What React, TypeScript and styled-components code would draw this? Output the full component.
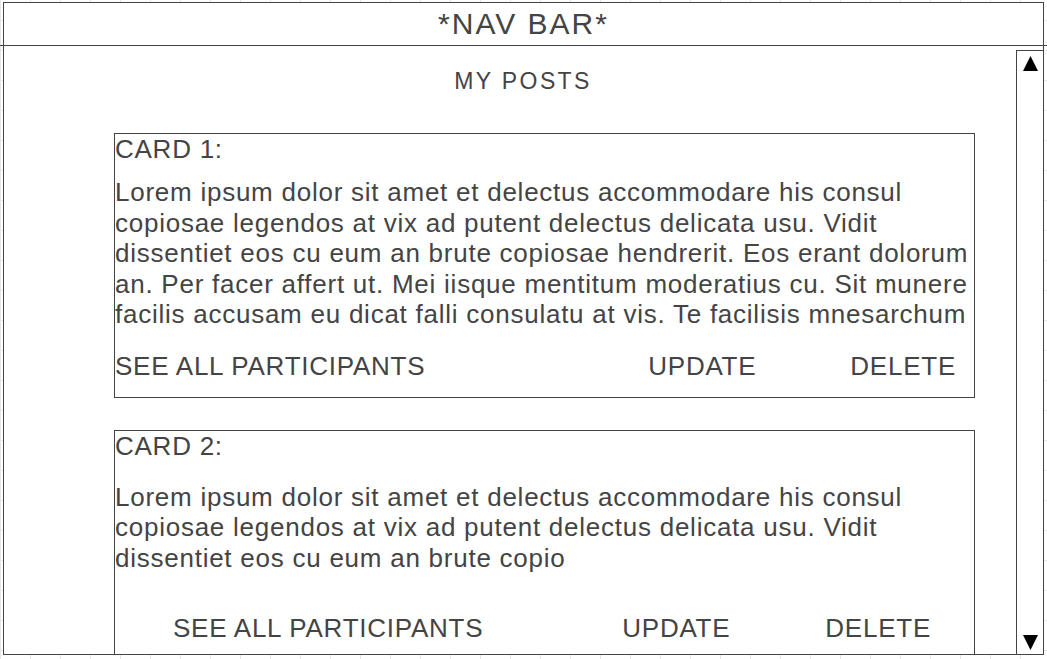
import React from "react";
import styled, { createGlobalStyle } from "styled-components";

const GlobalStyle = createGlobalStyle`
  html, body {
    margin: 0;
    padding: 0;
  }
  body {
    width: 1047px;
    height: 659px;
    overflow: hidden;
    background-color: #ffffff;
    background-image:
      linear-gradient(to right, #e6e6e6 1px, transparent 1px),
      linear-gradient(to bottom, #e6e6e6 1px, transparent 1px);
    background-size: 30px 30px, 30px 30px;
    background-position: 0 0, 0 20px;
    font-family: "Liberation Sans", Arial, sans-serif;
    color: #444444;
  }
`;

const Frame = styled.div`
  box-sizing: border-box;
  margin: 2px 0 0 3px;
  width: 1041px;
  height: 653px;
  border: 1px solid #444444;
  background: #ffffff;
  display: flex;
  flex-direction: column;
`;

const NavBar = styled.header`
  position: relative;
  height: 42px;
  flex: none;
  border-bottom: 1px solid #444444;
  display: flex;
  align-items: center;
  justify-content: center;
  font-size: 30px;
  letter-spacing: 2px;

  &::after {
    content: "";
    position: absolute;
    left: -4px;
    right: -4px;
    bottom: -1px;
    height: 1px;
    background: #444444;
  }
`;

const Content = styled.div`
  flex: 1;
  min-height: 0;
  display: flex;
  overflow: hidden;
`;

const Main = styled.main`
  flex: 1;
  min-width: 0;
  padding: 0 41px 0 110px;
  display: flex;
  flex-direction: column;
`;

const Title = styled.h1`
  margin: 20px -67px 0 -110px;
  font-weight: normal;
  font-size: 23px;
  line-height: 30px;
  letter-spacing: 2.4px;
  text-align: center;
`;

const Card = styled.section<{ $top: number }>`
  flex: none;
  margin-top: ${(p) => p.$top}px;
  border: 1px solid #444444;
  padding-bottom: 16px;
  font-size: 26px;
  letter-spacing: 0.75px;
`;

const Label = styled.div`
  line-height: 30px;
`;

const Body = styled.p<{ $top: number }>`
  margin: ${(p) => p.$top}px 0 0;
  line-height: 30.5px;
`;

const Actions = styled.div<{ $top: number; $left: number; $right: number }>`
  display: flex;
  align-items: center;
  margin-top: ${(p) => p.$top}px;
  padding: 0 ${(p) => p.$right}px 0 ${(p) => p.$left}px;
  line-height: 30px;
`;

const Action = styled.span<{ $push?: boolean; $gap?: number }>`
  margin-left: ${(p) => (p.$push ? "auto" : `${p.$gap ?? 0}px`)};
  white-space: nowrap;
  cursor: pointer;
`;

const Track = styled.aside`
  flex: none;
  box-sizing: border-box;
  width: 27px;
  margin-top: 4px;
  border-left: 1px solid #444444;
  border-top: 1px solid #444444;
  display: flex;
  flex-direction: column;
  justify-content: space-between;
  align-items: center;
  padding: 5px 0 4px;
`;

const Arrow = ({ down }: { down?: boolean }) => (
  <svg width="15" height="15" viewBox="0 0 15 15" aria-hidden="true">
    <polygon
      points={down ? "0,0 15,0 7.5,15" : "7.5,0 15,15 0,15"}
      fill="#000000"
    />
  </svg>
);

export default function App() {
  return (
    <>
      <GlobalStyle />
      <Frame>
        <NavBar>*NAV BAR*</NavBar>
        <Content>
          <Main>
            <Title>MY POSTS</Title>
            <Card $top={37}>
              <Label>CARD 1:</Label>
              <Body $top={13}>
                Lorem ipsum dolor sit amet et delectus accommodare his consul
                <br />
                copiosae legendos at vix ad putent delectus delicata usu. Vidit
                <br />
                dissentiet eos cu eum an brute copiosae hendrerit. Eos erant dolorum
                <br />
                an. Per facer affert ut. Mei iisque mentitum moderatius cu. Sit munere
                <br />
                facilis accusam eu dicat falli consulatu at vis. Te facilisis mnesarchum
              </Body>
              <Actions $top={21} $left={0} $right={18}>
                <Action>SEE ALL PARTICIPANTS</Action>
                <Action $push>UPDATE</Action>
                <Action $gap={94}>DELETE</Action>
              </Actions>
            </Card>
            <Card $top={32}>
              <Label>CARD 2:</Label>
              <Body $top={21}>
                Lorem ipsum dolor sit amet et delectus accommodare his consul
                <br />
                copiosae legendos at vix ad putent delectus delicata usu. Vidit
                <br />
                dissentiet eos cu eum an brute copio
              </Body>
              <Actions $top={40} $left={58} $right={43}>
                <Action>SEE ALL PARTICIPANTS</Action>
                <Action $push>UPDATE</Action>
                <Action $gap={95}>DELETE</Action>
              </Actions>
            </Card>
          </Main>
          <Track>
            <Arrow />
            <Arrow down />
          </Track>
        </Content>
      </Frame>
    </>
  );
}
